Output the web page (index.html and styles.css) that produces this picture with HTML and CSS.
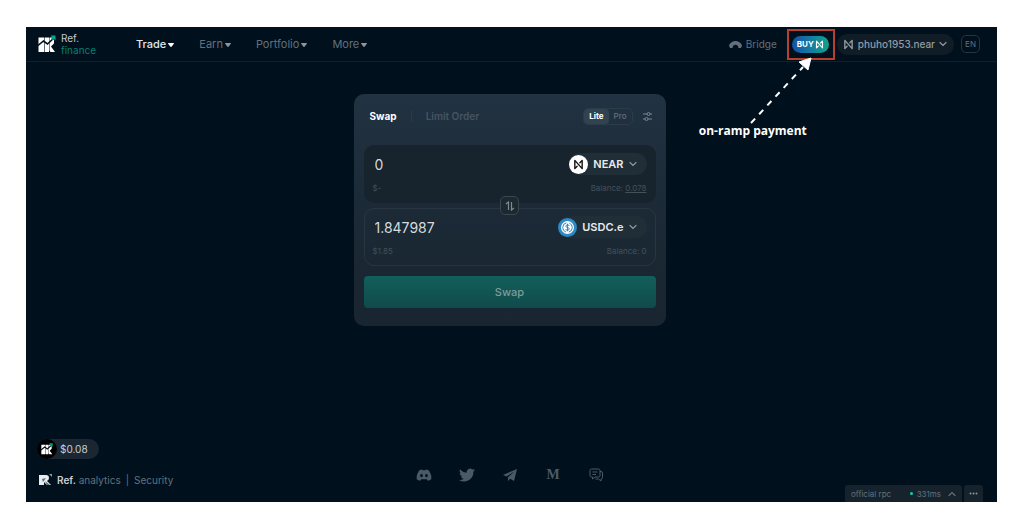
FILE: index.html
```html
<!DOCTYPE html>
<html lang="en">
<head>
    <meta charset="UTF-8">
    <meta name="viewport" content="width=device-width, initial-scale=1.0">
    <title>Ref. finance</title>
    <link rel="stylesheet" href="styles.css">
</head>
<body>
    <!-- Shared icons -->
    <svg class="icon-defs" aria-hidden="true">
        <symbol id="ref" viewBox="0 0 18 18">
            <path fill="#fff" d="M.5 2.500H6V17H.5zM6.600 2.500H11V17H6.600zM11.500 2.500H14L16 5V8.500L13 11.500 17 17H12.500L11.500 15.500z"/>
            <path fill="none" stroke="#00101d" stroke-width="1.600" d="M0 10.500L5.500 6l4 3L16 3"/>
            <path fill="#00a98c" d="M12.500.500H17.500V5.500L15.800 3.800 14.500 5 13 3.500 14.200 2.200z"/>
        </symbol>
        <symbol id="near" viewBox="0 0 12 12">
            <path fill="none" stroke="currentColor" stroke-width="1.500" stroke-linejoin="round" stroke-linecap="round" d="M4.500 8L2 10.500V1.500L10 10.500V1.500L7.500 4"/>
        </symbol>
        <symbol id="chevron" viewBox="0 0 8 8">
            <path fill="none" stroke="currentColor" stroke-width="1.200" stroke-linecap="round" d="M1 2.500l3 3 3-3"/>
        </symbol>
        <symbol id="caret" viewBox="0 0 6 4">
            <path fill="currentColor" d="M.5 0h5q.8.300.2 1L3.500 3.700q-.5.500-1 0L.3 1Q-.3.300.5 0z"/>
        </symbol>
    </svg>

    <div class="app">
        <header class="header">
            <a class="logo" href="#">
                <svg class="logo-mark"><use href="#ref"/></svg>
                <span>Ref.<br><span class="logo-green">finance</span></span>
            </a>
            <nav class="nav">
                <a class="active" href="#">Trade<svg class="caret"><use href="#caret"/></svg></a>
                <a href="#">Earn<svg class="caret"><use href="#caret"/></svg></a>
                <a href="#">Portfolio<svg class="caret"><use href="#caret"/></svg></a>
                <a href="#">More<svg class="caret"><use href="#caret"/></svg></a>
            </nav>
            <div class="account">
                <a class="bridge" href="#">
                    <svg width="13" height="8" viewBox="0 0 13 8"><path fill="currentColor" d="M0 5.500C2-.5 11-.5 13 5.500L12 8H9.500C9.500 3.500 3.500 3.500 3.500 8H1z"/></svg>
                    Bridge
                </a>
                <div class="buy-wrap">
                    <button class="buy">BUY<svg width="9" height="9"><use href="#near"/></svg></button>
                    <div class="note-box"></div>
                    <svg class="note-arrow" viewBox="0 0 64 68">
                        <path d="M2 66L54 10" fill="none" stroke="#fff" stroke-width="2" stroke-dasharray="6 6"/>
                        <path d="M62 1L59 13 55 9.500 50 5z" fill="#fff" stroke="#fff"/>
                    </svg>
                    <div class="note-text">on-ramp payment</div>
                </div>
                <button class="wallet">
                    <svg width="11" height="11"><use href="#near"/></svg>
                    phuho1953.near
                    <svg width="8" height="8"><use href="#chevron"/></svg>
                </button>
                <button class="lang">EN</button>
            </div>
        </header>

        <main class="main">
            <section class="card">
                <div class="card-header">
                    <button class="tab active">Swap</button>
                    <button class="tab">Limit Order</button>
                    <div class="mode">
                        <button class="active">Lite</button>
                        <button>Pro</button>
                    </div>
                    <button class="settings" aria-label="Settings">
                        <svg width="9" height="9" viewBox="0 0 9 9" fill="none" stroke="currentColor"><path d="M0 2h4M7 2h2M0 7h2M5 7h4"/><circle cx="5.500" cy="2" r="1.500"/><circle cx="3.500" cy="7" r="1.500"/></svg>
                    </button>
                </div>

                <div class="field field-in">
                    <div class="row">
                        <input class="amount" aria-label="Amount to pay" value="0">
                        <button class="token">
                            <span class="coin"><svg width="11" height="11"><use href="#near"/></svg></span>
                            NEAR
                            <svg width="8" height="8"><use href="#chevron"/></svg>
                        </button>
                    </div>
                    <div class="row small">
                        <span>$-</span>
                        <span>Balance: <a href="#">0.078</a></span>
                    </div>
                </div>
                <button class="flip" aria-label="Switch tokens">
                    <svg width="10" height="10" viewBox="0 0 10 10" fill="none" stroke="currentColor" stroke-width="1.200"><path d="M1 3l2.500-2v8M9 7L6.500 9V1"/></svg>
                </button>
                <div class="field field-out">
                    <div class="row">
                        <input class="amount" aria-label="Amount to receive" value="1.847987">
                        <button class="token">
                            <svg width="19" height="19" viewBox="0 0 19 19">
                                <circle cx="9.500" cy="9.500" r="9.500" fill="#2b8ac6"/>
                                <circle cx="9.500" cy="9.500" r="6.500" fill="#fff"/>
                                <circle cx="9.500" cy="9.500" r="4.800" fill="none" stroke="#2b7fc0" stroke-dasharray="12 3" stroke-dashoffset="-9"/>
                                <path d="M11.300 8Q11 6.800 9.500 6.800T7.800 8.200Q7.800 9.300 9.500 9.500T11.300 10.900Q11.300 12.200 9.500 12.200T7.700 11M9.500 5.700v7.600" fill="none" stroke="#2b7fc0" stroke-width=".9"/>
                            </svg>
                            USDC.e
                            <svg width="8" height="8"><use href="#chevron"/></svg>
                        </button>
                    </div>
                    <div class="row small">
                        <span>$1.85</span>
                        <span>Balance: 0</span>
                    </div>
                </div>

                <button class="submit">Swap</button>
            </section>
        </main>

        <footer class="footer">
            <div class="footer-left">
                <div class="price"><span class="price-icon"><svg width="12" height="12"><use href="#ref"/></svg></span>$0.08</div>
                <div class="links">
                    <svg width="13" height="12" viewBox="0 0 13 12"><path fill="#e8edf0" d="M0 1h7q3 0 3 3 0 2-2 3l4 4H8L5 8v3H0z"/><path fill="#5d6b77" d="M3 5l4-1-3 4zM6 7l5 4H8z"/><path fill="#8b99a5" d="M10 0h3v3z"/></svg>
                    <a href="#"><b>Ref.</b> analytics</a>
                    <span class="bar">|</span>
                    <a href="#">Security</a>
                </div>
            </div>
            <div class="social">
                <a href="#" aria-label="Discord"><svg width="16" height="16" viewBox="0 0 16 16"><path fill="currentColor" fill-rule="evenodd" d="M3.300 3.200Q5 2.500 6.200 2.400L6.700 3.300H9.300L9.800 2.400Q11 2.500 12.700 3.200 15.800 7.500 15.300 12.200 13.500 13.400 11.800 13.700L10.800 12.200H5.200L4.200 13.700Q2.500 13.400.7 12.200.2 7.500 3.300 3.200zM5.500 7A1.400 1.600 0 1 0 5.500 10.200 1.400 1.600 0 0 0 5.500 7zM10.500 7A1.400 1.600 0 1 0 10.500 10.200 1.400 1.600 0 0 0 10.500 7z"/></svg></a>
                <a href="#" aria-label="Twitter"><svg width="16" height="16" viewBox="0 0 24 24"><path fill="currentColor" d="M24 4.600a10 10 0 0 1-2.800.8 5 5 0 0 0 2.100-2.700 10 10 0 0 1-3.100 1.200 4.900 4.900 0 0 0-8.400 4.500A14 14 0 0 1 1.700 3.200a4.900 4.900 0 0 0 1.500 6.500 5 5 0 0 1-2.200-.6 4.900 4.900 0 0 0 3.900 4.900 5 5 0 0 1-2.200.1 4.900 4.900 0 0 0 4.600 3.400A9.900 9.900 0 0 1 0 19.500a14 14 0 0 0 21.500-12.400A10 10 0 0 0 24 4.600z"/></svg></a>
                <a href="#" aria-label="Telegram"><svg width="16" height="16" viewBox="0 0 16 16"><path fill="currentColor" d="M15 2L1 8l3.500 1.500L12.500 4.500 6 10.200V14l2.200-2.300L12 14z"/></svg></a>
                <a class="medium" href="#" aria-label="Medium">M</a>
                <a href="#" aria-label="Forum"><svg width="16" height="16" viewBox="0 0 16 16" fill="none" stroke="currentColor"><path d="M3.500 2h7q1.500 0 1.500 1.500v5q0 1.500-1.500 1.500H7l-2.500 2V10h-1Q2 10 2 8.500v-5Q2 2 3.500 2zM4.500 5h5M4.500 7.500h3.500M12 4.500h1q1.500 0 1.500 1.500v4.500q0 1.500-1.500 1.500v2l-2.500-2H7.500"/></svg></a>
            </div>
            <div class="rpc">
                <button class="rpc-main">
                    <span>official rpc</span>
                    <span class="ping">331ms</span>
                    <svg class="up" width="8" height="8"><use href="#chevron"/></svg>
                </button>
                <button class="rpc-more" aria-label="More"><svg width="9" height="3" viewBox="0 0 9 3" fill="currentColor"><circle cx="1.500" cy="1.500" r="1"/><circle cx="4.500" cy="1.500" r="1"/><circle cx="7.500" cy="1.500" r="1"/></svg></button>
            </div>
        </footer>
    </div>
</body>
</html>
```
FILE: styles.css
```css
* {
    box-sizing: border-box;
}
body {
    margin: 0;
    padding: 27px 27px 26px 26px;
    min-height: 100vh;
    display: flex;
    background: #fff;
    font-family: Inter, "Open Sans", sans-serif;
    font-size: 10px;
}
a {
    color: inherit;
    text-decoration: none;
}
button {
    font: inherit;
    color: inherit;
    background: none;
    border: none;
    padding: 0;
    cursor: pointer;
}
svg {
    flex-shrink: 0;
}
.icon-defs {
    position: absolute;
    width: 0;
    height: 0;
}
.app {
    flex: 1;
    display: flex;
    flex-direction: column;
    background: #00101d;
    color: #63707b;
}

/* Header */
.header {
    display: flex;
    align-items: center;
    height: 35px;
    padding: 0 17px 0 12px;
    border-bottom: 1px solid #0d202b;
}
.logo {
    display: flex;
    align-items: center;
    gap: 5px;
    width: 98px;
    color: #c3cbd1;
    font-size: 10px;
    line-height: 12px;
}
.logo-mark {
    width: 18px;
    height: 18px;
}
.logo-green {
    color: #087f70;
}
.nav {
    display: flex;
    gap: 25px;
    font-size: 11px;
}
.nav a {
    display: flex;
    align-items: center;
    gap: 2px;
}
.nav .active {
    color: #e3e8ec;
    font-weight: 500;
}
.caret {
    width: 6px;
    height: 4px;
    margin-top: 2px;
    color: #8a959e;
}
.active .caret {
    color: #fff;
}
.account {
    display: flex;
    align-items: center;
    margin-left: auto;
}
.bridge {
    display: flex;
    align-items: center;
    gap: 4px;
}
.buy-wrap {
    position: relative;
    margin: 0 8px 0 15px;
}
.buy {
    display: flex;
    align-items: center;
    justify-content: center;
    gap: 1px;
    width: 37px;
    height: 17px;
    border-radius: 9px;
    background: linear-gradient(90deg, #1451a8, #157ba0 50%, #10a58a);
    color: #fff;
    font-size: 8px;
    font-weight: 700;
}
.wallet {
    display: flex;
    align-items: center;
    justify-content: space-between;
    gap: 4px;
    height: 21px;
    padding: 0 7px 0 6px;
    border-radius: 10px;
    background: #101d27;
    color: #929ba3;
    font-weight: 500;
}
.lang {
    width: 19px;
    height: 18px;
    margin-left: 7px;
    border: 1px solid #26343e;
    border-radius: 5px;
    font-size: 8px;
}

/* Callout over the buy button */
.note-box {
    position: absolute;
    inset: -7px -6px -7px -5px;
    border: 2px solid #b8402f;
    pointer-events: none;
}
.note-arrow {
    position: absolute;
    top: 21px;
    right: 16px;
    width: 64px;
    height: 68px;
    pointer-events: none;
}
.note-text {
    position: absolute;
    top: 86px;
    right: 22px;
    color: #fff;
    font-family: "Open Sans", sans-serif;
    font-size: 12px;
    font-weight: 700;
    line-height: 18px;
    white-space: nowrap;
}

/* Swap card */
.main {
    flex: 1;
    padding: 32px 4px 0 0;
}
.card {
    max-width: 312px;
    margin: 0 auto;
    padding: 11px 10px 18px;
    border-radius: 10px;
    background: linear-gradient(#213242, #1b2a36 50%, #192530);
}
.card-header {
    display: flex;
    align-items: center;
    height: 22px;
    margin-bottom: 18px;
    padding: 0 4px 0 6px;
}
.tab {
    color: #475561;
    font-weight: 600;
}
.tab.active {
    margin-right: 14px;
    padding-right: 14px;
    border-right: 1px solid #2a3a47;
    color: #fff;
    font-weight: 700;
}
.mode {
    display: flex;
    margin-left: auto;
    border: 1px solid #2b3b48;
    border-radius: 5px;
    font-size: 8px;
}
.mode button {
    height: 15px;
    padding: 0 5px;
    border-radius: 4px;
    font-weight: 500;
}
.mode .active {
    background: #314251;
    color: #fff;
    font-weight: 700;
}
.settings {
    display: flex;
    margin-left: 10px;
    color: #7b8790;
}
.field {
    display: flex;
    flex-direction: column;
    gap: 8px;
    height: 58px;
    padding: 7px 8px 0;
    border: 1px solid transparent;
    border-radius: 10px;
}
.field-in {
    background: #18242d;
}
.field-out {
    border-color: #273641;
}
.row {
    display: flex;
    align-items: center;
    justify-content: space-between;
}
.small {
    color: #43515b;
    font-size: 8px;
    line-height: 10px;
}
.small a {
    text-decoration: underline;
}
.amount {
    flex: 1;
    min-width: 0;
    padding: 0 2px;
    border: none;
    outline: none;
    background: none;
    color: #d5dade;
    font: inherit;
    font-size: 14px;
}
.token {
    display: flex;
    align-items: center;
    gap: 5px;
    height: 22px;
    padding-right: 10px;
    border-radius: 11px;
    background: #202e37;
    color: #e8ebee;
    font-size: 11px;
    font-weight: 600;
}
.token > svg:last-child {
    color: #8d979f;
}
.coin {
    display: flex;
    align-items: center;
    justify-content: center;
    width: 19px;
    height: 19px;
    border-radius: 50%;
    background: #fff;
    color: #111;
}
.flip {
    position: relative;
    display: flex;
    align-items: center;
    justify-content: center;
    width: 19px;
    height: 19px;
    margin: -7px auto;
    border: 1px solid #3a4750;
    border-radius: 5px;
    background: #1d2931;
    color: #7f8a92;
}
.submit {
    width: 100%;
    height: 32px;
    margin-top: 10px;
    border-radius: 4px;
    background: linear-gradient(#125f5b, #104b4b);
    color: #7f9b9d;
    font-size: 11px;
    font-weight: 500;
}

/* Footer */
.footer {
    display: grid;
    grid-template-columns: 1fr auto 1fr;
    padding: 0 14px 0 11px;
}
.price {
    display: flex;
    align-items: center;
    gap: 3px;
    width: 62px;
    height: 20px;
    border-radius: 10px;
    background: #1a2733;
    color: #c9d0d5;
}
.price-icon {
    display: flex;
    align-items: center;
    justify-content: center;
    width: 20px;
    height: 20px;
    border-radius: 50%;
    background: #000;
}
.links {
    display: flex;
    align-items: center;
    gap: 5px;
    margin: 14px 0 15px 2px;
    line-height: 14px;
}
.links b {
    color: #c9d0d5;
    font-weight: 600;
}
.social {
    display: flex;
    align-items: center;
    gap: 27px;
    padding-top: 8px;
    color: #4b5a69;
}
.social a {
    display: flex;
    justify-content: center;
    width: 16px;
}
.medium {
    font-family: "Liberation Serif", serif;
    font-size: 14px;
    font-weight: 700;
    line-height: 16px;
}
.rpc {
    display: flex;
    align-items: flex-end;
    justify-content: flex-end;
    gap: 2px;
    font-size: 8px;
}
.rpc-main {
    display: flex;
    align-items: center;
    gap: 7px;
    width: 117px;
    height: 17px;
    padding: 0 6px;
    border-radius: 3px 3px 0 0;
    background: #16232d;
}
.ping {
    display: flex;
    align-items: center;
    gap: 4px;
    margin-left: auto;
}
.ping::before {
    content: "";
    width: 3px;
    height: 3px;
    border-radius: 50%;
    background: #00d6af;
}
.up {
    transform: rotate(180deg);
}
.rpc-more {
    display: flex;
    align-items: center;
    justify-content: center;
    width: 19px;
    height: 17px;
    border-radius: 3px 3px 0 0;
    background: #16232d;
    color: #8a959e;
}
```
